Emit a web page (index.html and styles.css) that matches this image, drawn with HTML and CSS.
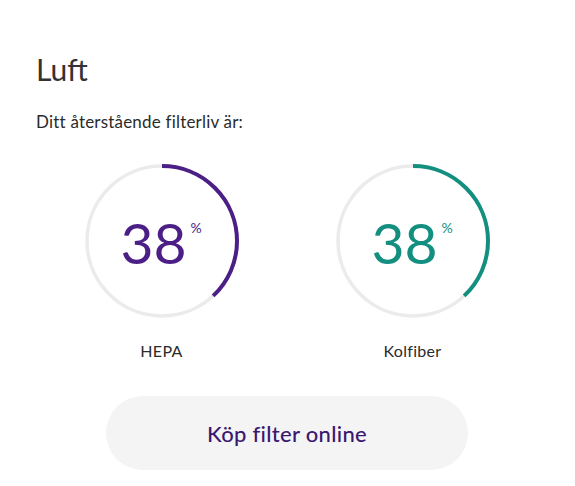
FILE: index.html
```html
<!DOCTYPE html>
<html lang="sv">
<head>
<meta charset="utf-8">
<link rel="stylesheet" href="styles.css">
</head>
<body>
<main class="card">
  <h1 class="title">Luft</h1>
  <p class="subtitle">Ditt återstående filterliv är:</p>
  <div class="gauges">
    <div class="gauge">
      <div class="ring">
        <svg width="156" height="156" viewBox="0 0 156 156">
          <circle cx="78" cy="78" r="75" fill="none" stroke="#ebebeb" stroke-width="3.5"/>
          <circle cx="78" cy="78" r="75" fill="none" stroke="#4b1f86" stroke-width="4" stroke-dasharray="179.07 471.24" transform="rotate(-90 78 78)"/>
        </svg>
        <div class="value purple">38<span class="pct">%</span></div>
      </div>
      <div class="label">HEPA</div>
    </div>
    <div class="gauge">
      <div class="ring">
        <svg width="156" height="156" viewBox="0 0 156 156">
          <circle cx="78" cy="78" r="75" fill="none" stroke="#ebebeb" stroke-width="3.5"/>
          <circle cx="78" cy="78" r="75" fill="none" stroke="#138f80" stroke-width="4" stroke-dasharray="179.07 471.24" transform="rotate(-90 78 78)"/>
        </svg>
        <div class="value teal">38<span class="pct">%</span></div>
      </div>
      <div class="label">Kolfiber</div>
    </div>
  </div>
  <div class="actions">
    <button class="buy">Köp filter online</button>
  </div>
</main>
</body>
</html>
```

FILE: styles.css
```css
html, body {
  margin: 0;
  padding: 0;
  background: #ffffff;
}
body {
  font-family: "Lato", "Open Sans", sans-serif;
  color: #2e2e2e;
}
.card {
  padding: 51px 37px 0 36px;
}
.title {
  margin: 0;
  font-size: 30px;
  font-weight: 400;
  line-height: 36px;
  color: #333333;
}
.subtitle {
  margin: 24px 0 0 0;
  font-size: 17px;
  line-height: 22px;
  letter-spacing: 0.2px;
  color: #2b2b2b;
}
.gauges {
  display: grid;
  grid-template-columns: 1fr 1fr;
  margin-top: 30px;
}
.gauge {
  display: flex;
  flex-direction: column;
  align-items: center;
}
.ring {
  position: relative;
  width: 156px;
  height: 156px;
}
.ring svg {
  display: block;
}
.value {
  position: absolute;
  left: 0;
  right: 0;
  top: 48px;
  text-align: center;
  font-size: 57px;
  font-weight: 400;
  line-height: 62px;
  padding-right: 16px;
}
.pct {
  position: absolute;
  font-size: 14px;
  line-height: 14px;
  margin-left: 4px;
  top: 10px;
  font-weight: 400;
}
.purple { color: #4b1f86; }
.teal { color: #138f80; }
.label {
  margin-top: 22px;
  font-size: 16px;
  line-height: 20px;
  font-weight: 400;
  letter-spacing: 0.3px;
  color: #2b2b2b;
}
.actions {
  display: flex;
  justify-content: center;
  margin-top: 35px;
}
.buy {
  width: 362px;
  height: 74px;
  border: none;
  border-radius: 37px;
  background: #f5f4f5;
  font-family: "Lato", "Open Sans", sans-serif;
  font-size: 22px;
  font-weight: 500;
  letter-spacing: 0.3px;
  color: #3a1870;
  cursor: pointer;
}
```
